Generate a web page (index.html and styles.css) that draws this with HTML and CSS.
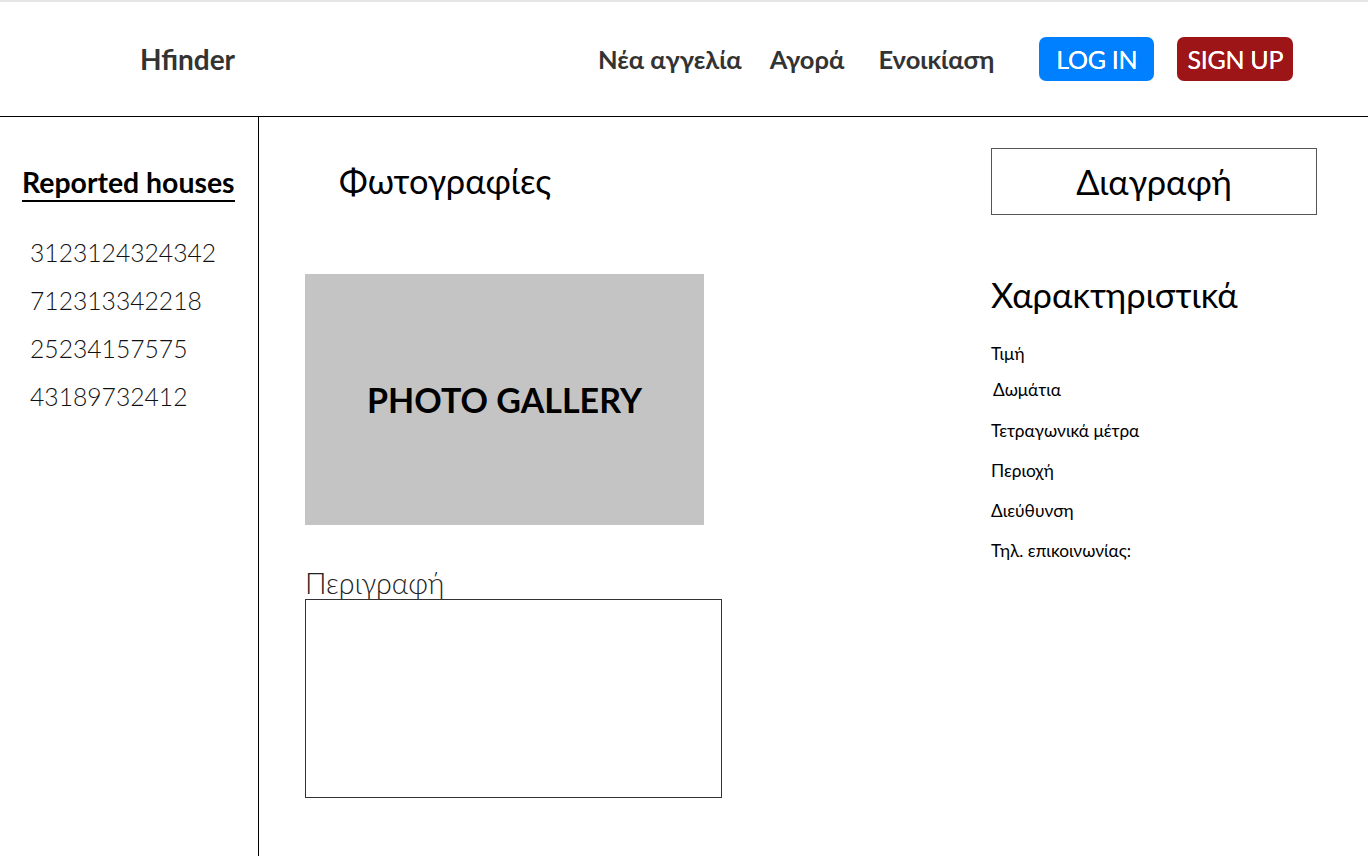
FILE: index.html
```html
<!DOCTYPE html>
<html lang="el">
<head>
<meta charset="utf-8">
<title>Hfinder</title>
<link rel="stylesheet" href="styles.css">
</head>
<body>
<header class="topbar">
  <div class="brand">Hfinder</div>
  <nav class="nav">
    <a class="nav-link">Νέα αγγελία</a>
    <a class="nav-link">Αγορά</a>
    <a class="nav-link">Ενοικίαση</a>
  </nav>
  <div class="auth">
    <a class="btn btn-login">LOG IN</a>
    <a class="btn btn-signup">SIGN UP</a>
  </div>
</header>
<div class="layout">
  <aside class="sidebar">
    <h2 class="side-title">Reported houses</h2>
    <ul class="id-list">
      <li>3123124324342</li>
      <li>712313342218</li>
      <li>25234157575</li>
      <li>43189732412</li>
    </ul>
  </aside>
  <main class="content">
    <section class="photos">
      <h1 class="photos-title">Φωτογραφίες</h1>
      <div class="gallery">PHOTO GALLERY</div>
      <div class="desc-label">Περιγραφή</div>
      <div class="desc-box"></div>
    </section>
    <section class="details">
      <button class="delete-btn">Διαγραφή</button>
      <h2 class="feat-title">Χαρακτηριστικά</h2>
      <ul class="feat-list">
        <li class="f1">Τιμή</li>
        <li class="f2">Δωμάτια</li>
        <li class="f3">Τετραγωνικά μέτρα</li>
        <li class="f4">Περιοχή</li>
        <li class="f5">Διεύθυνση</li>
        <li class="f6">Τηλ. επικοινωνίας:</li>
      </ul>
    </section>
  </main>
</div>
</body>
</html>
```

FILE: styles.css
```css
* { box-sizing: border-box; }
html, body { margin: 0; padding: 0; }
body {
  font-family: Lato, "Open Sans", "Noto Sans", sans-serif;
  color: #000;
  background: #fff;
  width: 1368px;
  height: 856px;
  overflow: hidden;
  border-top: 2px solid #e5e5e5;
}
.topbar {
  height: 115px;
  border-bottom: 1px solid #000;
  display: flex;
  align-items: center;
  padding-left: 140px;
}
.brand {
  font-weight: 700;
  font-size: 28px;
  color: #333;
  width: 458px;
}
.nav {
  display: flex;
}
.nav-link {
  font-weight: 700;
  font-size: 25.5px;
  color: #333;
}
.nav-link:nth-child(1) { margin-right: 28px; }
.nav-link:nth-child(2) { margin-right: 34px; }
.auth {
  display: flex;
  gap: 23px;
  margin-left: 45px;
}
.btn {
  display: flex;
  align-items: center;
  justify-content: center;
  height: 44px;
  width: 115px;
  border-radius: 7px;
  color: #fff;
  font-size: 25px;
  font-weight: 400;
  letter-spacing: -0.3px;
  text-shadow: 0 0 0.4px #fff;
}
.btn-login { background: #0080ff; }
.btn-signup { background: #9e1518; width: 116px; }

.layout {
  display: flex;
  height: 739px;
}
.sidebar {
  width: 259px;
  border-right: 1px solid #000;
  padding: 50px 0 0 22px;
}
.side-title {
  margin: 0;
  display: inline-block;
  font-size: 28.4px;
  font-weight: 700;
  line-height: 30px;
  border-bottom: 2px solid #000;
  padding-bottom: 3px;
}
.id-list {
  list-style: none;
  margin: 27px 0 0 8px;
  padding: 0;
}
.id-list li {
  font-size: 24.7px;
  font-weight: 300;
  line-height: 48px;
  color: #111;
}
.content {
  flex: 1;
  display: flex;
}
.photos {
  width: 732px;
  padding: 44px 0 0 46px;
}
.photos-title {
  margin: 0 0 0 34px;
  font-size: 34.4px;
  font-weight: 400;
  line-height: 40px;
}
.gallery {
  margin-top: 73px;
  width: 399px;
  height: 251px;
  background: #c4c4c4;
  display: flex;
  align-items: center;
  justify-content: center;
  font-size: 34px;
  font-weight: 700;
}
.desc-label {
  margin-top: 42px;
  font-size: 28.5px;
  font-weight: 300;
  line-height: 32px;
  color: #222;
}
.desc-box {
  width: 417px;
  height: 199px;
  border: 1px solid #333;
}
.details {
  padding-top: 31px;
}
.delete-btn {
  display: block;
  width: 326px;
  height: 67px;
  border: 1px solid #555;
  background: #fff;
  font-family: inherit;
  font-size: 34.4px;
  font-weight: 400;
  color: #000;
  padding: 0;
}
.feat-title {
  margin: 60px 0 0 0;
  font-size: 34.5px;
  font-weight: 400;
  line-height: 40px;
}
.feat-list {
  list-style: none;
  margin: 29px 0 0 0;
  padding: 0;
  font-size: 17.3px;
}
.feat-list li { line-height: 20px; }
.feat-list .f2 { margin-top: 16px; padding-left: 2px; }
.feat-list .f3 { margin-top: 21px; }
.feat-list .f4 { margin-top: 20px; }
.feat-list .f5 { margin-top: 20px; }
.feat-list .f6 { margin-top: 20px; }
```
